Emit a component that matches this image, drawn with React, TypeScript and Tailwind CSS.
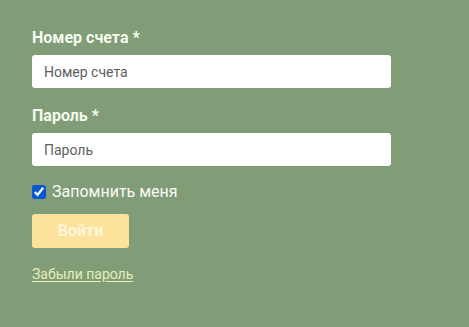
import React from 'react';

export default function App() {
    return (
        <div className="min-h-screen w-full bg-[#819d77] px-8 pt-[28px]" style={{ fontFamily: 'Roboto, "Liberation Sans", sans-serif' }}>
            <form className="w-[359px] flex flex-col">
                {/* ACCOUNT */}
                <label className="text-[16px] font-bold text-[#f5fbef] leading-[19px]">Номер счета *</label>
                <input
                    type="text"
                    placeholder="Номер счета"
                    className="mt-2 h-[33px] w-full rounded-[3px] bg-white px-3 text-[14px] text-[#555] placeholder:text-[#606060] outline-none"
                />

                {/* PASSWORD */}
                <label className="mt-[18px] text-[16px] font-bold text-[#f5fbef] leading-[19px]">Пароль *</label>
                <input
                    type="password"
                    placeholder="Пароль"
                    className="mt-2 h-[33px] w-full rounded-[3px] bg-white px-3 text-[14px] text-[#555] placeholder:text-[#606060] outline-none"
                />

                {/* REMEMBER */}
                <label className="mt-[16px] flex items-center gap-[6px] text-[16px] text-[#f7fbf3] leading-[20px]">
                    <input type="checkbox" defaultChecked className="w-[14px] h-[14px] accent-[#0b57d0] m-0" />
                    Запомнить меня
                </label>

                <button
                    type="button"
                    className="mt-[12px] h-[34px] w-[97px] rounded-[3px] bg-[#fde29b] text-[16px] font-bold text-[#fff6dc]"
                >
                    Войти
                </button>

                <a href="#" className="mt-[17px] self-start text-[14px] text-[#e4efbd] underline underline-offset-2 leading-[18px]">
                    Забыли пароль
                </a>
            </form>
        </div>
    );
}
